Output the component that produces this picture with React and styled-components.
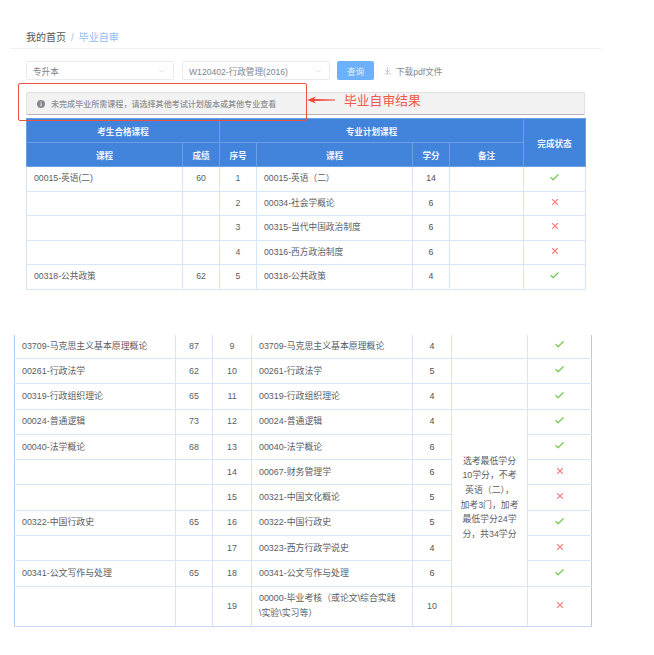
import React from 'react';
import styled, { createGlobalStyle } from 'styled-components';
import { ChevronDown, ArrowDownToLine, Check, X } from 'lucide-react';

const GlobalStyle = createGlobalStyle`
	body {
		margin: 0;
		background: #fff;
		font-family: "Liberation Sans", "Noto Sans CJK SC", sans-serif;
		color: #5a5d63;
	}
`;

const Page = styled('div')`
	position: relative;
	width: 654px;
	height: 655px;
	overflow: hidden;
`;

/*
* Breadcrumb
* */
const Header = styled('div')`
	margin: 0 52px 0 10px;
	padding: 32px 0 4px 16px;
	border-bottom: 1px solid #f0f1f3;
	font-size: 10px;
	line-height: 12px;
	color: #555;
`;

const Separator = styled('span')`
	margin: 0 5px;
	color: #bbb;
`;

const Current = styled('span')`
	color: #8fbdf5;
`;

/*
* Filter bar
* */
const Toolbar = styled('div')`
	display: flex;
	align-items: center;
	margin: 12px 0 0 26px;
	height: 19px;
	font-size: 8.6px;
`;

const Select = styled('div')`
	display: flex;
	align-items: center;
	justify-content: space-between;
	box-sizing: border-box;
	width: 148px;
	height: 19px;
	margin-right: 8px;
	padding: 0 6px 0 6px;
	border: 1px solid #e8ebf0;
	border-radius: 2px;
	color: #80848c;
`;

const QueryButton = styled('div')`
	display: flex;
	align-items: center;
	justify-content: center;
	width: 37px;
	height: 19px;
	margin-left: -1px;
	border-radius: 2px;
	background: #6db0fb;
	color: #e8f3ff;
`;

const DownloadLink = styled('div')`
	display: flex;
	align-items: center;
	gap: 4px;
	margin-left: 9px;
	color: #85888e;
`;

/*
* Alert
* */
const Alert = styled('div')`
	display: flex;
	align-items: center;
	gap: 6px;
	box-sizing: border-box;
	width: 559px;
	height: 23px;
	margin: 12px 0 0 26px;
	padding-left: 10px;
	background: #f2f2f2;
	border: 1px solid #e0e0e0;
	border-bottom: 1px solid #b5b5b5;
	border-radius: 2px;
	font-size: 8.05px;
	font-weight: 500;
	color: #8d9096;
`;

/*
* Annotation drawn on top of the screenshot
* */
const Callout = styled('div')`
	position: absolute;
	left: 18px;
	top: 83px;
	width: 287px;
	height: 36px;
	border: 1px solid #ea5444;
	border-radius: 2px;
`;

const CalloutArrow = styled('svg')`
	position: absolute;
	left: 306px;
	top: 96px;
`;

const CalloutLabel = styled('div')`
	position: absolute;
	left: 344px;
	top: 92px;
	font-size: 12.8px;
	line-height: 17px;
	color: #ef5a48;
`;

/*
* Tables
* */
const Table = styled('table')`
	table-layout: fixed;
	border-collapse: collapse;
	width: ${(p) => p.$width}px;
	margin: ${(p) => p.$margin};
	font-size: ${(p) => p.$fontSize}px;
`;

const Col = styled('col')`
	width: ${(p) => p.$width}px;
`;

const HeadCell = styled('th')`
	height: 23px;
	padding: 0;
	background: #4284dc;
	border: 1px solid #6a9fe4;
	color: #eef4fc;
	font-size: 8.6px;
	font-weight: 700;
	text-align: center;
`;

const Row = styled('tr')`
	height: ${(p) => p.$height}px;
`;

const Cell = styled('td')`
	padding: 0;
	border: 1px solid #d6e5f8;
	border-top: ${(p) => (p.$open ? 'none' : '1px solid #d6e5f8')};
	border-bottom-color: ${(p) => (p.$end ? '#c5daf5' : '#d6e5f8')};
	line-height: 15px;
	text-align: ${(p) => (p.$left ? 'left' : 'center')};
	padding-left: ${(p) => (p.$left ? '7px' : '0')};
	color: ${(p) => (p.$dark ? '#4b4e54' : '#5a5d63')};

	&:first-child {
		border-left-color: ${(p) => p.$edge || '#d6e5f8'};
	}

	&:last-child {
		border-right-color: ${(p) => p.$edge || '#d6e5f8'};
	}
`;

const Remark = styled('div')`
	line-height: 14.7px;
`;

const StatusMark = styled('span')`
	display: inline-flex;
	vertical-align: middle;
	margin-top: -3px;
	color: ${(p) => (p.$ok ? '#76c853' : '#f98080')};
`;

const Status = ({ ok }) => (
	<StatusMark $ok={ok}>
		{ok ? <Check size={11} strokeWidth={2.6} /> : <X size={10} strokeWidth={2.6} />}
	</StatusMark>
);

const InfoIcon = () => (
	<svg width="8" height="8" viewBox="0 0 8 8">
		<circle cx="4" cy="4" r="4" fill="#85888e" />
		<rect x="3.5" y="3.3" width="1" height="3" fill="#f2f2f2" />
		<rect x="3.5" y="1.6" width="1" height="1" fill="#f2f2f2" />
	</svg>
);

const firstRows = [
	['00015-英语(二)', '60', '1', '00015-英语（二）', '14', true],
	['', '', '2', '00034-社会学概论', '6', false],
	['', '', '3', '00315-当代中国政治制度', '6', false],
	['', '', '4', '00316-西方政治制度', '6', false],
	['00318-公共政策', '62', '5', '00318-公共政策', '4', true],
];

const secondRows = [
	['03709-马克思主义基本原理概论', '87', '9', '03709-马克思主义基本原理概论', '4', true],
	['00261-行政法学', '62', '10', '00261-行政法学', '5', true],
	['00319-行政组织理论', '65', '11', '00319-行政组织理论', '4', true],
	['00024-普通逻辑', '73', '12', '00024-普通逻辑', '4', true],
	['00040-法学概论', '68', '13', '00040-法学概论', '6', true],
	['', '', '14', '00067-财务管理学', '6', false],
	['', '', '15', '00321-中国文化概论', '5', false],
	['00322-中国行政史', '65', '16', '00322-中国行政史', '5', true],
	['', '', '17', '00323-西方行政学说史', '4', false],
	['00341-公文写作与处理', '65', '18', '00341-公文写作与处理', '6', true],
];

const firstCols = [156, 37, 37, 156, 37, 74, 62];
const secondCols = [161, 37, 39, 161, 39, 76, 64];
const EDGE = '#a9cbf5';

export default function App() {
	return (
		<Page>
			<GlobalStyle />
			<Header>
				我的首页<Separator>/</Separator><Current>毕业自审</Current>
			</Header>

			<Toolbar>
				<Select>专升本<ChevronDown size={10} strokeWidth={1} color="#b4b8bf" /></Select>
				<Select>W120402-行政管理(2016)<ChevronDown size={10} strokeWidth={1} color="#b4b8bf" /></Select>
				<QueryButton>查询</QueryButton>
				<DownloadLink>
					<ArrowDownToLine size={9} strokeWidth={1.2} />
					下载pdf文件
				</DownloadLink>
			</Toolbar>

			<Alert>
				<InfoIcon />
				未完成毕业所需课程，请选择其他考试计划版本或其他专业查看
			</Alert>

			<Table $width={559} $margin="3px 0 0 26px" $fontSize={8.7}>
				<colgroup>
					{firstCols.map((w, i) => <Col key={i} $width={w} />)}
				</colgroup>
				<thead>
					<tr>
						<HeadCell colSpan={2}>考生合格课程</HeadCell>
						<HeadCell colSpan={4}>专业计划课程</HeadCell>
						<HeadCell rowSpan={2}>完成状态</HeadCell>
					</tr>
					<tr>
						<HeadCell>课程</HeadCell>
						<HeadCell>成绩</HeadCell>
						<HeadCell>序号</HeadCell>
						<HeadCell>课程</HeadCell>
						<HeadCell>学分</HeadCell>
						<HeadCell>备注</HeadCell>
					</tr>
				</thead>
				<tbody>
					{firstRows.map(([course, score, no, plan, credit, ok]) => (
						<Row key={no} $height={24.5}>
							<Cell $left>{course}</Cell>
							<Cell>{score}</Cell>
							<Cell>{no}</Cell>
							<Cell $left>{plan}</Cell>
							<Cell $dark>{credit}</Cell>
							<Cell />
							<Cell><Status ok={ok} /></Cell>
						</Row>
					))}
				</tbody>
			</Table>

			<Table $width={577} $margin="45px 0 0 14px" $fontSize={8.9}>
				<colgroup>
					{secondCols.map((w, i) => <Col key={i} $width={w} />)}
				</colgroup>
				<tbody>
					{secondRows.map(([course, score, no, plan, credit, ok], i) => (
						<Row key={no} $height={i === 0 ? 24 : 25.3}>
							<Cell $left $edge={EDGE} $open={i === 0}>{course}</Cell>
							<Cell $open={i === 0}>{score}</Cell>
							<Cell $open={i === 0}>{no}</Cell>
							<Cell $left $open={i === 0}>{plan}</Cell>
							<Cell $dark $open={i === 0}>{credit}</Cell>
							{i < 3 && <Cell $open={i === 0} />}
							{i === 3 && (
								<Cell rowSpan={7}>
									<Remark>
										选考最低学分<br />
										10学分，不考<br />
										英语（二），<br />
										加考3门，加考<br />
										最低学分24学<br />
										分，共34学分
									</Remark>
								</Cell>
							)}
							<Cell $edge={EDGE} $open={i === 0}><Status ok={ok} /></Cell>
						</Row>
					))}
					<Row $height={40}>
						<Cell $left $edge={EDGE} $end />
						<Cell $end />
						<Cell $end>19</Cell>
						<Cell $left $end>
							00000-毕业考核（或论文\综合实践<br />
							\实验\实习等）
						</Cell>
						<Cell $end>10</Cell>
						<Cell $end />
						<Cell $edge={EDGE} $end><Status ok={false} /></Cell>
					</Row>
				</tbody>
			</Table>

			<Callout />
			<CalloutArrow width="30" height="8" viewBox="0 0 30 8">
				<path d="M1 4 L10 0.4 L8 3.1 L29 3.4 L29 4.6 L8 4.9 L10 7.6 Z" fill="#ea4a38" />
			</CalloutArrow>
			<CalloutLabel>毕业自审结果</CalloutLabel>
		</Page>
	);
}
